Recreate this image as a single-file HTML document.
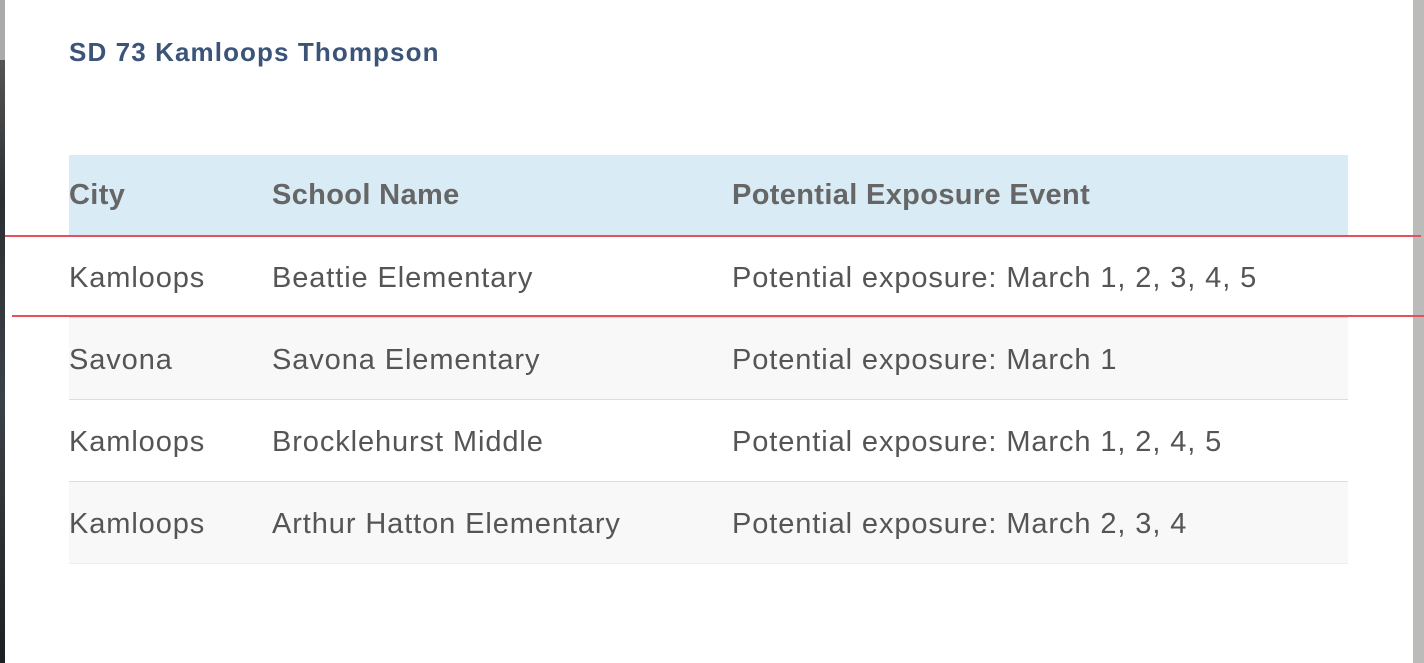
<!DOCTYPE html>
<html><head><style>
body{margin:0;width:1424px;height:663px;position:relative;overflow:hidden;background:#fff;font-family:"Liberation Sans",Arial,sans-serif;}
.l{position:absolute;left:0;top:0;width:5px;height:663px;background:linear-gradient(#aaa 0,#aaa 60px,#555 60px,#2a2f33 200px,#3b4247 400px,#1c1f22 663px);}
.r{position:absolute;left:1413px;top:0;width:11px;height:663px;background:#bbbbb9;}
h1{position:absolute;left:69px;top:37px;margin:0;font-size:26px;font-weight:bold;color:#3b5478;letter-spacing:1.1px;}
table{position:absolute;left:69px;top:155px;width:1279px;border-collapse:collapse;font-size:29px;color:#555;}
td,th{padding:0;text-align:left;vertical-align:middle;}
th{height:80px;background:#d9ebf5;font-weight:bold;color:#666;letter-spacing:0.35px;}
td{height:78px;border-top:1px solid #ddd;letter-spacing:0.9px;padding-top:3px;}
tr.a td{background:#f8f8f8;}
tr:last-child td{border-bottom:1px solid #eee;}
.c1{width:203px}.c2{width:460px}
.red{position:absolute;height:2px;background:#e5505c;}
</style></head><body>
<div class="l"></div><div class="r"></div>
<h1>SD 73 Kamloops Thompson</h1>
<table>
<tr><th class="c1">City</th><th class="c2">School Name</th><th>Potential Exposure Event</th></tr>
<tr><td>Kamloops</td><td>Beattie Elementary</td><td>Potential exposure: March 1, 2, 3, 4, 5</td></tr>
<tr class="a"><td>Savona</td><td>Savona Elementary</td><td>Potential exposure: March 1</td></tr>
<tr><td>Kamloops</td><td>Brocklehurst Middle</td><td>Potential exposure: March 1, 2, 4, 5</td></tr>
<tr class="a"><td>Kamloops</td><td>Arthur Hatton Elementary</td><td>Potential exposure: March 2, 3, 4</td></tr>
</table>
<div class="red" style="left:5px;top:235px;width:1416px"></div>
<div class="red" style="left:12px;top:315px;width:1412px"></div>
</body></html>
